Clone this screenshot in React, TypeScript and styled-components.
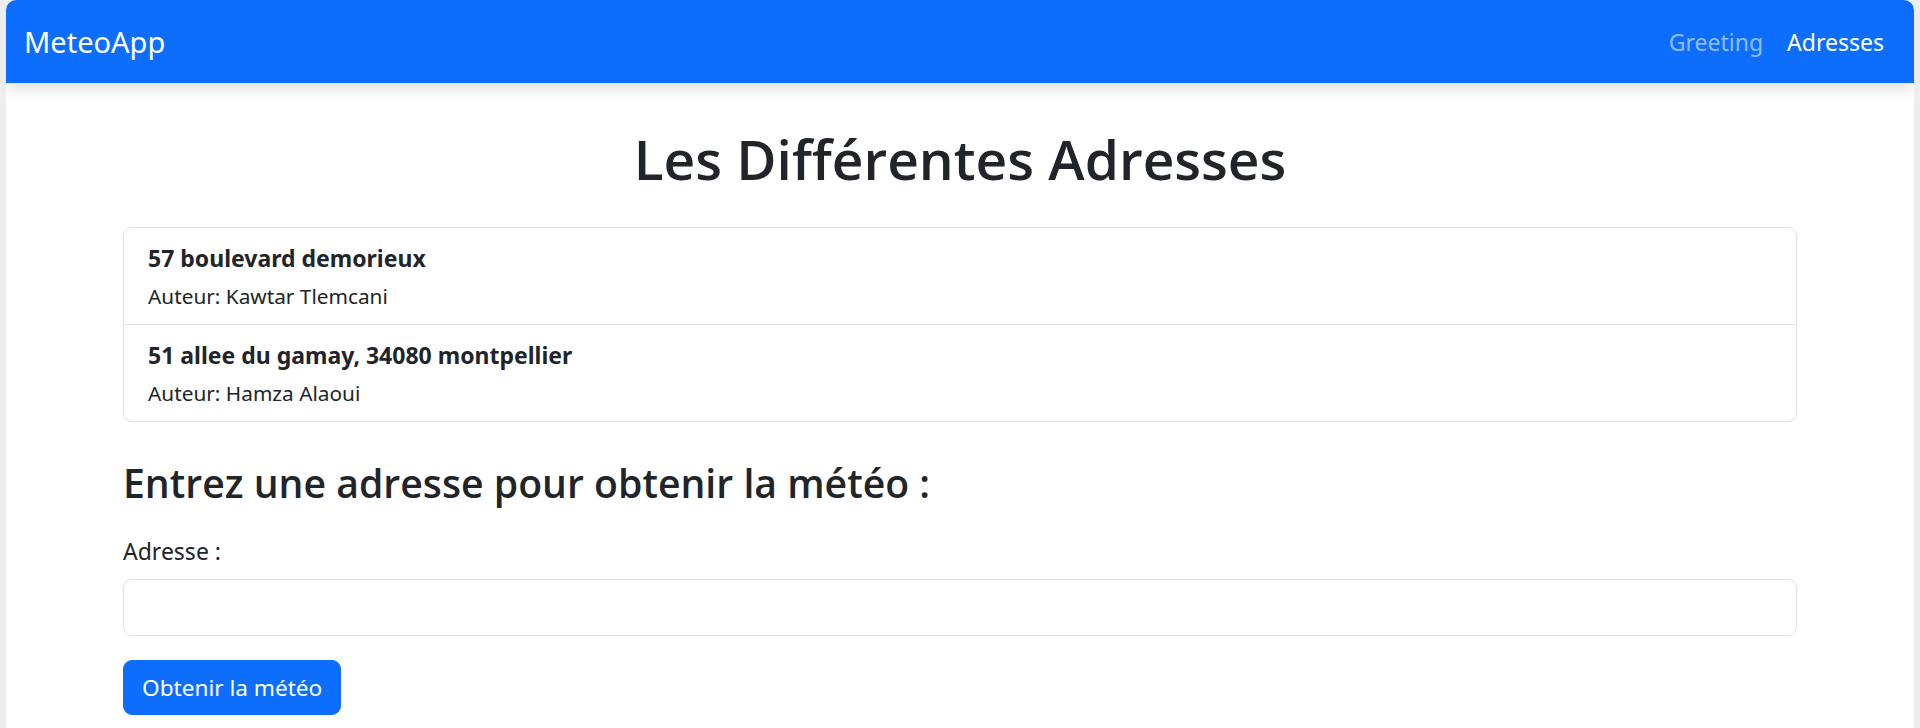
import styled, { createGlobalStyle } from "styled-components";

const GlobalStyle = createGlobalStyle`
  html, body {
    margin: 0;
    padding: 0;
    background: #ededed;
  }
  body {
    font-family: "Noto Sans", "Open Sans", sans-serif;
    color: #212529;
  }
  * {
    box-sizing: border-box;
  }
`;

const Frame = styled.div`
  padding: 0 6px;
  min-height: 100vh;
`;

const Window = styled.div`
  background: #fff;
  border-radius: 10px 10px 0 0;
  min-height: 728px;
  overflow: hidden;
`;

const Navbar = styled.nav`
  display: flex;
  align-items: center;
  justify-content: space-between;
  height: 83px;
  padding: 0 18px;
  background: #0d6efd;
  box-shadow: 0 6px 14px rgba(0, 0, 0, 0.12);
  position: relative;
`;

const Brand = styled.a`
  font-size: 29px;
  line-height: 45px;
  color: #fff;
  text-decoration: none;
`;

const NavList = styled.div`
  display: flex;
`;

const NavLink = styled.a<{ $active?: boolean }>`
  padding: 0 12px;
  font-size: 23px;
  line-height: 36px;
  color: ${(p) => (p.$active ? "#fff" : "rgba(255, 255, 255, 0.55)")};
  text-decoration: none;
`;

const Container = styled.main`
  max-width: 1710px;
  margin: 0 auto;
  padding: 0 18px;
`;

const Title = styled.h1`
  margin: 40px 0 32px;
  text-align: center;
  font-family: "Open Sans", "Noto Sans", sans-serif;
  font-size: 55px;
  line-height: 72px;
  font-weight: 600;
`;

const ListGroup = styled.ul`
  list-style: none;
  margin: 0 0 36px;
  padding: 0;
  border: 1px solid #dee2e6;
  border-radius: 9px;
`;

const ListItem = styled.li`
  padding: 16px 24px 12px;
  & + & {
    border-top: 1px solid #dee2e6;
  }
`;

const ItemTitle = styled.h6`
  margin: 0 0 8px;
  font-size: 23px;
  line-height: 29px;
  font-weight: 700;
`;

const ItemMeta = styled.small`
  display: block;
  font-size: 20.8px;
  line-height: 31px;
`;

const SectionTitle = styled.h3`
  margin: 0 0 25px;
  font-family: "Open Sans", "Noto Sans", sans-serif;
  font-size: 39.2px;
  line-height: 50px;
  font-weight: 600;
`;

const Field = styled.div`
  margin-bottom: 24px;
`;

const Label = styled.label`
  display: block;
  margin-bottom: 10px;
  font-size: 23px;
  line-height: 36px;
`;

const Input = styled.input`
  display: block;
  width: 100%;
  height: 57px;
  padding: 0 18px;
  font-family: inherit;
  font-size: 23px;
  color: #212529;
  border: 1px solid #dee2e6;
  border-radius: 9px;
  outline: none;
`;

const Button = styled.button`
  height: 55px;
  padding: 0 18px;
  font-family: inherit;
  font-size: 22.6px;
  color: #fff;
  background: #0d6efd;
  border: 1px solid #0d6efd;
  border-radius: 9px;
  cursor: pointer;
`;

const addresses = [
  { id: 1, address: "57 boulevard demorieux", author: "Kawtar Tlemcani" },
  { id: 2, address: "51 allee du gamay, 34080 montpellier", author: "Hamza Alaoui" },
];

function App() {
  return (
    <Frame>
      <GlobalStyle />
      <Window>
        <Navbar>
          <Brand href="#">MeteoApp</Brand>
          <NavList>
            <NavLink href="#">Greeting</NavLink>
            <NavLink href="#" $active>
              Adresses
            </NavLink>
          </NavList>
        </Navbar>
        <Container>
          <Title>Les Différentes Adresses</Title>
          <ListGroup>
            {addresses.map((a) => (
              <ListItem key={a.id}>
                <ItemTitle>{a.address}</ItemTitle>
                <ItemMeta>Auteur: {a.author}</ItemMeta>
              </ListItem>
            ))}
          </ListGroup>
          <SectionTitle>Entrez une adresse pour obtenir la météo :</SectionTitle>
          <form onSubmit={(e) => e.preventDefault()}>
            <Field>
              <Label htmlFor="adresse">Adresse :</Label>
              <Input id="adresse" type="text" />
            </Field>
            <Button type="submit">Obtenir la météo</Button>
          </form>
        </Container>
      </Window>
    </Frame>
  );
}

export default App;
